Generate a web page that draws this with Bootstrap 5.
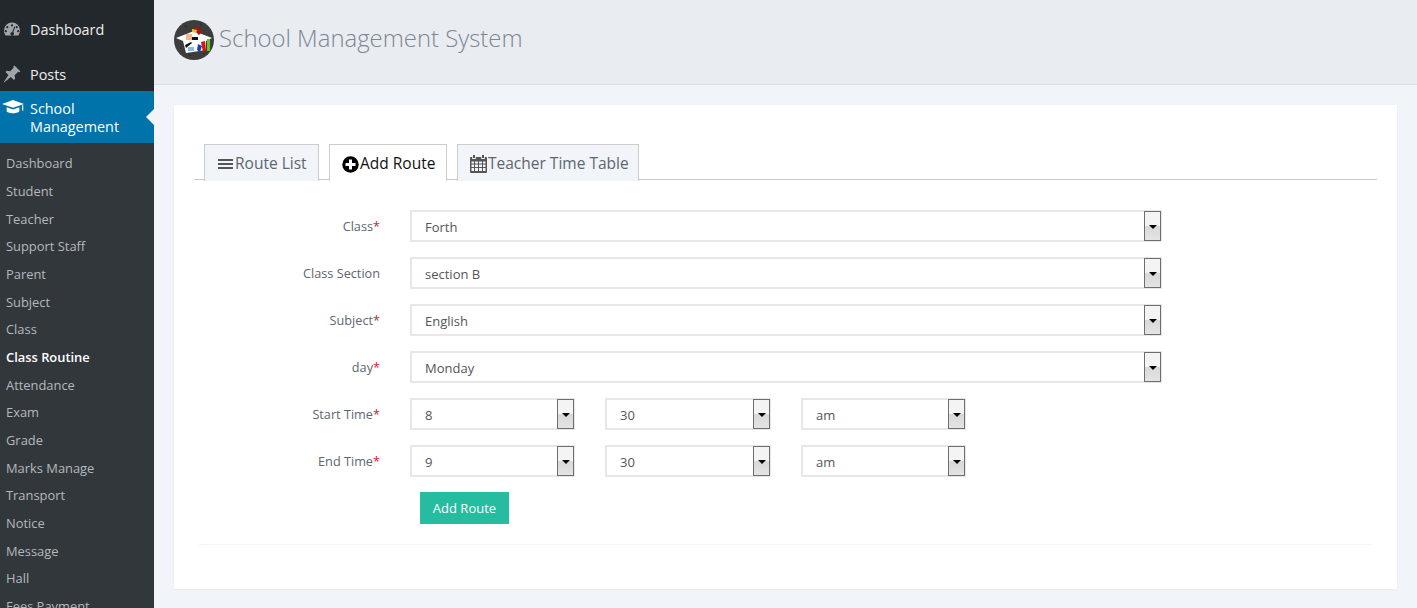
<!DOCTYPE html>
<html lang="en">
  <head>
    <meta charset="UTF-8" />
    <meta name="viewport" content="width=device-width, initial-scale=1.0" />
    <title>School Management System</title>
    <link
      href="https://cdn.jsdelivr.net/npm/bootstrap@5.3.0/dist/css/bootstrap.min.css"
      rel="stylesheet"
    />
    <style>
      html, body { height: 608px; overflow: hidden; }
      body { font-family: "Open Sans", sans-serif; font-size: 13px; color: #555; background: #f1f4f9; }
      .side-bar { width: 154px; height: 608px; flex: none; background: #32373c; overflow: hidden; }
      .side-top { background: #23282d; height: 91px; padding-top: 8px; }
      .side-link { display: flex; color: #eee; font-size: 14.4px; line-height: 18px; text-decoration: none; }
      .side-link svg { flex: none; width: 18px; height: 18px; margin: 0 9px 0 3px; }
      .side-link.first { height: 45px; padding-top: 13px; }
      .side-link.second { height: 38px; padding-top: 13px; }
      .side-link.second svg { margin-top: -1px; }
      .side-active { position: relative; background: #0073aa; color: #fff; height: 52px; padding-top: 9px; }
      .side-link.side-active svg { width: 22px; margin: -2px 6px 0 2px; }
      .side-active::after { content: ""; position: absolute; right: 0; top: 18px; border: 8px solid transparent; border-left-width: 0; border-right-color: #f1f4f9; }
      .side-sub { padding-top: 6.45px; }
      .side-sub a { display: block; padding-left: 6px; height: 27.67px; line-height: 28px; color: #b4b9be; font-size: 12.9px; text-decoration: none; }
      .side-sub a.on { color: #fff; font-weight: 600; }
      .top-head { height: 85px; background: #e9ecf1; border-bottom: 1px solid #dcdfe4; padding: 20px 0 0 20px; }
      .brand-name { font-size: 23.9px; font-weight: 300; color: #7d8791; line-height: 36px; margin-left: 5px; }
      .main-panel { margin: 20px 20px 0; height: 484px; background: #fff; padding: 39px 20px 0; box-shadow: 0 1px 2px rgba(0, 0, 0, .05); }
      .route-tabs { border-bottom: 1px solid #c8c8c8; padding-left: 10px; gap: 10px; height: 36px; }
      .route-tabs .nav-link { display: flex; align-items: center; height: 37px; padding: 2px 0 0 12px; font-size: 15.5px; color: #5d6670; background: #f1f4f9; border: 1px solid #ccc; border-bottom: 0; border-radius: 0; margin: 0; }
      .route-tabs .nav-item:nth-child(1) .nav-link { width: 115px; }
      .route-tabs .nav-item:nth-child(2) .nav-link { width: 118px; }
      .route-tabs .nav-item:nth-child(3) .nav-link { width: 182px; }
      .route-tabs .nav-link.active { background: #fff; color: #111; font-weight: 500; position: relative; z-index: 1; }
      .route-tabs svg { flex: none; margin-right: 1px; }
      .route-tabs svg.bars-icon { margin: 0 2px 0 1px; }
      .form-area { padding-top: 30px; }
      .form-line { display: flex; margin-bottom: 15px; height: 32px; }
      .form-line label { width: 186px; margin-right: 30px; text-align: right; line-height: 32px; color: #5d6670; font-size: 12.7px; }
      .form-line label b { color: #e8112d; font-weight: 400; }
      .pick-wrap { position: relative; width: 752px; height: 32px; }
      .pick-wrap.narrow { width: 165px; margin-right: 30px; }
      .pick-wrap.narrow:nth-of-type(2) { width: 166px; }
      .pick-wrap .form-select { height: 32px; padding: 4px 14px 0 13px; border: 2px solid #e6e8e8; border-radius: 0; background-image: none; font-size: 13px; color: #555; appearance: none; }
      .pick-arrow { position: absolute; right: 1px; top: 1px; width: 17px; height: 30px; border: 1px solid #6e6e6e; background: linear-gradient(#f4f4f4 50%, #d8d8d8 50%, #e4e4e4); pointer-events: none; }
      .pick-arrow::after { content: ""; position: absolute; left: 4px; top: 13px; border: 4px solid transparent; border-top-color: #000; border-bottom-width: 0; }
      .save-btn { margin-left: 226px; width: 89px; height: 32px; padding: 2px 0 0; background: #26bca0; border: 0; border-radius: 0; color: #fff; font-size: 13px; }
      .save-btn:hover { background: #26bca0; color: #fff; }
      .form-end { margin: 20px 4px 0; height: 1px; background: #f6f6f6; box-shadow: 0 2px 4px rgba(0, 0, 0, .05); }
    </style>
  </head>
  <body>
    <div class="d-flex">
      <!-- Side menu -->
      <div class="side-bar">
        <div class="side-top">
          <a href="#" class="side-link first">
            <svg viewBox="0 0 18 18"><path fill="#a0a5aa" fill-rule="evenodd" d="M9 1.500a8 8 0 0 0-8 8c0 1.900.6 3.600 1.700 5h12.600a8 8 0 0 0 1.700-5 8 8 0 0 0-8-8zM9 3.300a1.100 1.100 0 1 1 0 2.200 1.100 1.100 0 0 1 0-2.200zM4.300 5.100a1.100 1.100 0 1 1 0 2.200 1.100 1.100 0 0 1 0-2.200zM13.700 5.100a1.100 1.100 0 1 1 0 2.200 1.100 1.100 0 0 1 0-2.200zM2.800 9.100a1.100 1.100 0 1 1 0 2.200 1.100 1.100 0 0 1 0-2.200zM15.200 9.100a1.100 1.100 0 1 1 0 2.200 1.100 1.100 0 0 1 0-2.200zM11.300 5.500l.9.400-2 5.300a1.800 1.800 0 1 1-1-.3z"/></svg>
            Dashboard
          </a>
          <a href="#" class="side-link second">
            <svg viewBox="0 0 18 18"><path fill="#a0a5aa" d="M11.500 .5 17.500 6.500l-1.200.8-1-.5-3.700 3.400.5 3.600-1.200 1.200-3-3L1 17.500l-.3-.3 4.700-7.300-2.900-3 1.200-1.200 3.600.5 3.400-3.700-.4-1z"/></svg>
            Posts
          </a>
        </div>
        <a href="#" class="side-link side-active">
          <svg viewBox="0 0 18 18" preserveAspectRatio="none"><path fill="#fff" d="M9 2 0 6l9 3.800L18 6zM3.800 9.300V13c0 1.300 2.400 2.200 5.200 2.200s5.200-.9 5.200-2.200V9.300L9 11.500zM16.400 7.500v5h1v-5.400z"/></svg>
          <span>School<br />Management</span>
        </a>
        <div class="side-sub">
          <a href="#">Dashboard</a>
          <a href="#">Student</a>
          <a href="#">Teacher</a>
          <a href="#">Support Staff</a>
          <a href="#">Parent</a>
          <a href="#">Subject</a>
          <a href="#">Class</a>
          <a href="#" class="on">Class Routine</a>
          <a href="#">Attendance</a>
          <a href="#">Exam</a>
          <a href="#">Grade</a>
          <a href="#">Marks Manage</a>
          <a href="#">Transport</a>
          <a href="#">Notice</a>
          <a href="#">Message</a>
          <a href="#">Hall</a>
          <a href="#">Fees Payment</a>
        </div>
      </div>

      <div class="flex-grow-1">
        <!-- Header -->
        <div class="top-head d-flex align-items-start">
          <svg width="40" height="40" viewBox="0 0 40 40">
            <circle cx="20" cy="20" r="20" fill="#3d3d3d" />
            <path fill="#2a2a2a" d="M10 5l3 1-1 2zM26 3l2 1-1 2zM14 35l2-1 1 2zM29 33l2 1-2 1zM6 27l2 1-1 1z" />
            <path fill="#fff" d="M2 18 20 11l18 7-6 3v9l-20 3-3-12z" />
            <rect x="12" y="14" width="6" height="6" fill="#f3b48f" />
            <path fill="#b80d0d" d="M22 6l6 6-3 3-5-5z" />
            <path fill="#e8c420" d="M18 9l5 1-1 3-4-1z" />
            <path fill="#1c3fa8" d="M24 24l4 2-2 6-3-2z" />
            <path fill="#d11" d="M27 22l4-1 1 9-3 2z" />
            <rect x="33" y="19" width="3" height="12" fill="#6cc22c" />
            <path fill="#111" d="M11 25l6-3 1 1-6 5zM18 17h6v3h-6z" />
            <path fill="#8fb8e8" d="M14 27h6v4h-6z" />
          </svg>
          <span class="brand-name">School Management System</span>
        </div>

        <!-- Content -->
        <div class="main-panel">
          <ul class="nav route-tabs">
            <li class="nav-item">
              <a class="nav-link" href="#">
                <svg width="15" height="14" viewBox="0 0 15 14" class="bars-icon"><path fill="#555" d="M0 2h15v2H0zM0 6h15v2H0zM0 10h15v2H0z"/></svg>Route List
              </a>
            </li>
            <li class="nav-item">
              <a class="nav-link active" href="#">
                <svg width="17" height="17" viewBox="0 0 17 17"><circle cx="8.500" cy="8.500" r="8.200" fill="#000"/><path fill="#fff" d="M7 3.500h3V7h3.500v3H10v3.500H7V10H3.500V7H7z"/></svg>Add Route
              </a>
            </li>
            <li class="nav-item">
              <a class="nav-link" href="#">
                <svg width="17" height="18" viewBox="0 0 17 18"><path fill="#555" fill-rule="evenodd" d="M3 0h2v3H3zM12 0h2v3h-2zM1 2h1.200v2h3.600V2h5.400v2h3.600V2H16a1 1 0 0 1 1 1v14a1 1 0 0 1-1 1H1a1 1 0 0 1-1-1V3a1 1 0 0 1 1-1zM1.500 6.500v2h2.500v-2zM5 6.500v2h3v-2zM9 6.500v2h3v-2zM13 6.500v2h2.500v-2zM1.500 9.500v2.500h2.500V9.500zM5 9.500v2.500h3V9.500zM9 9.500v2.500h3V9.500zM13 9.500v2.500h2.500V9.500zM1.500 13v3h2.500v-3zM5 13v3h3v-3zM9 13v3h3v-3zM13 13v3h2.500v-3z"/></svg>Teacher Time Table
              </a>
            </li>
          </ul>

          <form class="form-area">
            <div class="form-line">
              <label>Class<b>*</b></label>
              <div class="pick-wrap"><select class="form-select"><option>Forth</option></select><span class="pick-arrow"></span></div>
            </div>
            <div class="form-line">
              <label>Class Section</label>
              <div class="pick-wrap"><select class="form-select"><option>section B</option></select><span class="pick-arrow"></span></div>
            </div>
            <div class="form-line">
              <label>Subject<b>*</b></label>
              <div class="pick-wrap"><select class="form-select"><option>English</option></select><span class="pick-arrow"></span></div>
            </div>
            <div class="form-line">
              <label>day<b>*</b></label>
              <div class="pick-wrap"><select class="form-select"><option>Monday</option></select><span class="pick-arrow"></span></div>
            </div>
            <div class="form-line">
              <label>Start Time<b>*</b></label>
              <div class="pick-wrap narrow"><select class="form-select"><option>8</option></select><span class="pick-arrow"></span></div>
              <div class="pick-wrap narrow"><select class="form-select"><option>30</option></select><span class="pick-arrow"></span></div>
              <div class="pick-wrap narrow"><select class="form-select"><option>am</option></select><span class="pick-arrow"></span></div>
            </div>
            <div class="form-line">
              <label>End Time<b>*</b></label>
              <div class="pick-wrap narrow"><select class="form-select"><option>9</option></select><span class="pick-arrow"></span></div>
              <div class="pick-wrap narrow"><select class="form-select"><option>30</option></select><span class="pick-arrow"></span></div>
              <div class="pick-wrap narrow"><select class="form-select"><option>am</option></select><span class="pick-arrow"></span></div>
            </div>
            <button type="button" class="btn save-btn">Add Route</button>
            <div class="form-end"></div>
          </form>
        </div>
      </div>
    </div>
  </body>
</html>
